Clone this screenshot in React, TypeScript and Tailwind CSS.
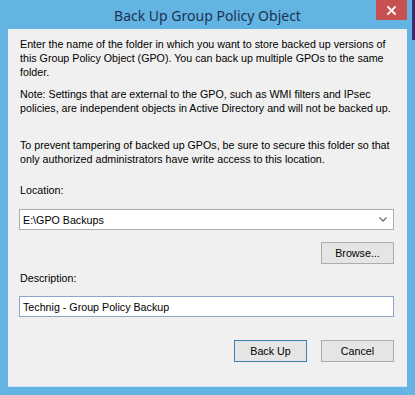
export default function App() {
  return (
    <div className="relative w-[415px] h-[395px] bg-[#63b3e3] overflow-hidden" style={{ fontFamily: '"Liberation Sans", Arial, sans-serif' }}>
      {/* title bar */}
      <div className="h-[29px] flex items-center justify-center">
        <span className="text-[14px] text-[#1c3450] pt-[1px]" style={{ fontFamily: '"Noto Sans", "Open Sans", sans-serif' }}>
          Back Up Group Policy Object
        </span>
      </div>
      <div className="absolute top-0 left-[376px] w-[31px] h-[20px] bg-[#c75050] flex items-center justify-center">
        <svg width="9" height="9" viewBox="0 0 9 9">
          <path d="M1 1 L8 8 M8 1 L1 8" stroke="#ffffff" strokeWidth="1.8" strokeLinecap="square" />
        </svg>
      </div>
      <div className="absolute top-0 right-0 w-[3px] h-[40px] bg-[#3a2a78]" />

      {/* client area */}
      <div className="ml-[8px] w-[399px] h-[358px] bg-[#f0f0f0] border-b border-[#cfe5f5] pl-[12px] pr-[13px] pt-[8px] text-[10.7px] leading-[14px] text-black">
        <p className="whitespace-nowrap">
          Enter the name of the folder in which you want to store backed up versions of<br />
          this Group Policy Object (GPO). You can back up multiple GPOs to the same<br />
          folder.
        </p>
        <p className="whitespace-nowrap mt-[8px]">
          Note: Settings that are external to the GPO, such as WMI filters and IPsec<br />
          policies, are independent objects in Active Directory and will not be backed up.
        </p>
        <p className="whitespace-nowrap mt-[23px]">
          To prevent tampering of backed up GPOs, be sure to secure this folder so that<br />
          only authorized administrators have write access to this location.
        </p>
        <div className="mt-[17px]">Location:</div>
        <div className="mt-[12px] -ml-[1px] h-[21px] bg-white border border-[#abadb3] flex items-center justify-between pl-[3px] pr-[6px]">
          <span>E:\GPO Backups</span>
          <svg width="8" height="5" viewBox="0 0 8 5">
            <path d="M0.5 0.5 L4 4 L7.5 0.5" fill="none" stroke="#707070" strokeWidth="1.3" />
          </svg>
        </div>
        <div className="mt-[12px] flex justify-end">
          <button className="w-[73px] h-[22px] bg-[#e5e5e5] border border-[#acacac] text-[10.7px]">Browse...</button>
        </div>
        <div className="mt-[7px]">Description:</div>
        <div className="mt-[11px] -ml-[1px] h-[21px] bg-white border border-[#8ea4c8] flex items-center pl-[3px]">
          <span>Technig - Group Policy Backup</span>
        </div>
        <div className="mt-[23px] flex justify-end gap-[14px]">
          <button className="w-[73px] h-[22px] bg-[#e5e5e5] border border-[#3c7fb1] text-[10.7px]">Back Up</button>
          <button className="w-[73px] h-[22px] bg-[#e5e5e5] border border-[#acacac] text-[10.7px]">Cancel</button>
        </div>
      </div>
    </div>
  );
}
